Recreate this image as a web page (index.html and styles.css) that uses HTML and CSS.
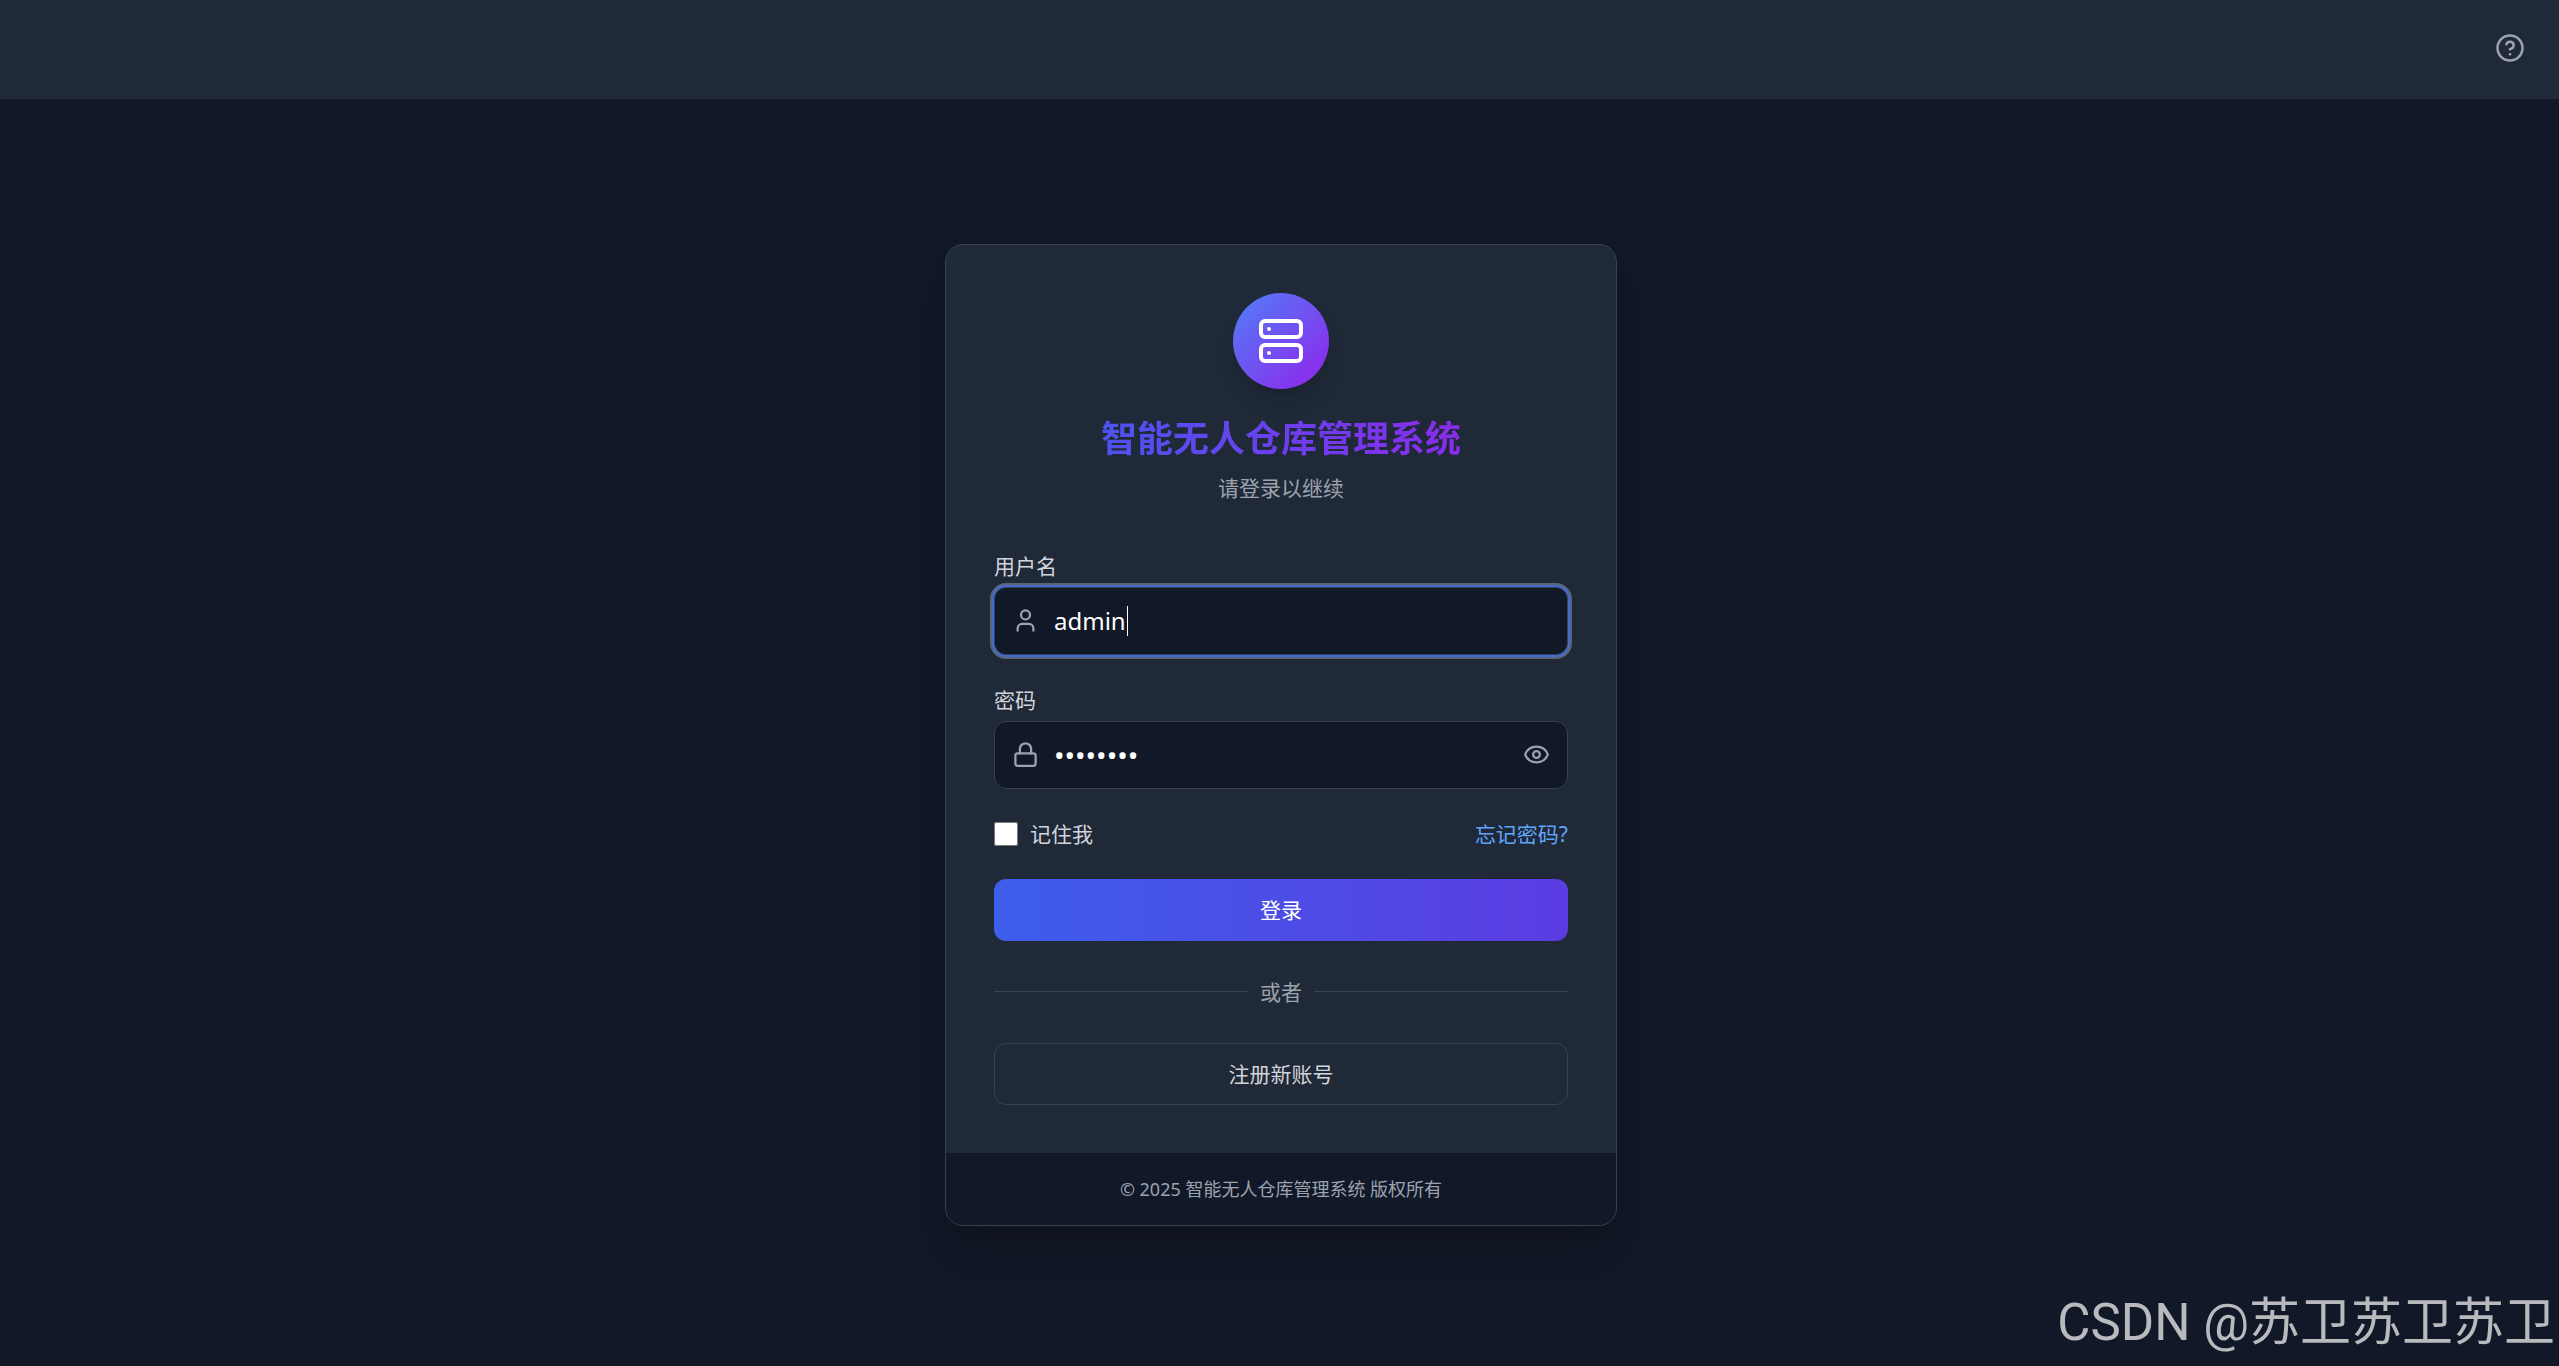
FILE: index.html
```html
<!DOCTYPE html>
<html lang="zh-CN">
<head>
<meta charset="utf-8">
<meta name="viewport" content="width=device-width, initial-scale=1">
<title>智能无人仓库管理系统</title>
<link rel="stylesheet" href="styles.css">
</head>
<body>
<header class="topbar">
  <button class="icon-button" type="button" aria-label="帮助">
    <svg class="icon icon-help" viewBox="0 0 24 24" aria-hidden="true"><circle cx="12" cy="12" r="10"/><path d="M9.09 9a3 3 0 0 1 5.83 1c0 2-3 3-3 3"/><path d="M12 17h.01"/></svg>
  </button>
</header>
<main class="page">
  <section class="card">
    <div class="card-body">
      <div class="brand">
        <div class="logo">
          <svg class="icon icon-server" viewBox="0 0 24 24" aria-hidden="true"><rect x="2" y="2" width="20" height="8" rx="2"/><rect x="2" y="14" width="20" height="8" rx="2"/><path d="M6 6h.01M6 18h.01"/></svg>
        </div>
        <h1 class="title">智能无人仓库管理系统</h1>
        <p class="subtitle">请登录以继续</p>
      </div>
      <form class="form">
        <div class="field">
          <label class="label" for="username">用户名</label>
          <div class="control control-active">
            <svg class="icon" viewBox="0 0 24 24" aria-hidden="true"><path d="M19 21v-2a4 4 0 0 0-4-4H9a4 4 0 0 0-4 4v2"/><circle cx="12" cy="7" r="4"/></svg>
            <div class="typed">
              <input class="input" id="username" type="text" value="admin">
              <span class="caret"></span>
            </div>
          </div>
        </div>
        <div class="field">
          <label class="label" for="password">密码</label>
          <div class="control">
            <svg class="icon" viewBox="0 0 24 24" aria-hidden="true"><rect x="3" y="11" width="18" height="11" rx="2"/><path d="M7 11V7a5 5 0 0 1 10 0v4"/></svg>
            <input class="input input-password" id="password" type="password" value="admin123">
            <button class="icon-button" type="button" aria-label="显示密码">
              <svg class="icon" viewBox="0 0 24 24" aria-hidden="true"><path d="M2.062 12.348a1 1 0 0 1 0-.696 10.75 10.75 0 0 1 19.876 0 1 1 0 0 1 0 .696 10.75 10.75 0 0 1-19.876 0"/><circle cx="12" cy="12" r="3"/></svg>
            </button>
          </div>
        </div>
        <div class="options">
          <label class="remember" for="remember"><input class="checkbox" id="remember" type="checkbox">记住我</label>
          <a class="link" href="#">忘记密码?</a>
        </div>
        <button class="button button-primary" type="submit">登录</button>
      </form>
      <div class="divider">或者</div>
      <button class="button button-outline" type="button">注册新账号</button>
    </div>
    <footer class="card-footer">© 2025 智能无人仓库管理系统 版权所有</footer>
  </section>
</main>
<div class="watermark">CSDN @苏卫苏卫苏卫</div>
</body>
</html>
```
FILE: styles.css
```css
*, *::before, *::after { box-sizing: border-box; }

body {
  margin: 0;
  min-height: 100vh;
  display: flex;
  flex-direction: column;
  background: #111827;
  color: #d1d5db;
  font: 21px/30px "Noto Sans", "Noto Sans CJK SC", sans-serif;
}

h1, p { margin: 0; }
button, input { font: inherit; color: inherit; }

.topbar {
  display: flex;
  align-items: center;
  justify-content: flex-end;
  height: 99px;
  padding: 0 34px 3px;
  background: #1f2937;
}

.icon {
  display: block;
  flex: none;
  width: 27px;
  height: 27px;
  fill: none;
  stroke: #9ca3af;
  stroke-width: 2;
  stroke-linecap: round;
  stroke-linejoin: round;
}

.icon-help { width: 30px; height: 30px; }
.icon-server { width: 48px; height: 48px; stroke: #fff; }

.icon-button {
  display: block;
  padding: 0;
  border: 0;
  background: none;
  cursor: pointer;
}

.page {
  flex: 1;
  display: grid;
  place-items: center;
  padding: 4px 0 0 3px;
}

.card {
  width: 100%;
  max-width: 672px;
  overflow: hidden;
  background: #1f2937;
  border: 1px solid #374151;
  border-radius: 18px;
  box-shadow: 0 30px 38px -8px rgb(16 20 28 / 70%), 0 12px 15px -9px rgb(16 20 28 / 80%);
}

.card-body { padding: 48px; }

.brand {
  display: flex;
  flex-direction: column;
  align-items: center;
  text-align: center;
}

.logo {
  display: grid;
  place-items: center;
  width: 96px;
  height: 96px;
  margin-bottom: 24px;
  border-radius: 50%;
  background: linear-gradient(135deg, #4f7ff8, #9322ea);
  box-shadow: 0 15px 22px -4px rgb(0 0 0 / 12%), 0 6px 9px -6px rgb(0 0 0 / 12%);
}

.title {
  align-self: stretch;
  font-size: 36px;
  line-height: 52px;
  font-weight: 700;
  color: transparent;
  background: linear-gradient(90deg, #3b5ff0, #9b20ea);
  background-clip: text;
  -webkit-background-clip: text;
}

.subtitle {
  margin-top: 8px;
  color: #9ca3af;
}

.form { margin-top: 48px; }
.field { margin-bottom: 30px; }

.label {
  display: block;
  margin-bottom: 6px;
}

.control {
  display: flex;
  align-items: center;
  gap: 15px;
  height: 68px;
  padding: 0 17px;
  background: #111827;
  border: 1px solid #374151;
  border-radius: 12px;
}

.control-active {
  box-shadow: 0 0 0 2px #436bd0, 0 0 0 4px #5a6475;
}

.typed {
  position: relative;
  flex: 1;
  display: flex;
}

.caret {
  position: absolute;
  left: 73px;
  top: 3px;
  width: 1px;
  height: 30px;
  background: #fff;
}

.input {
  flex: 1;
  min-width: 0;
  height: 36px;
  padding: 0;
  border: 0;
  outline: 0;
  background: none;
  color: #fff;
  font-size: 24px;
}

.input-password { font-size: 28px; }

.options {
  display: flex;
  align-items: center;
  justify-content: space-between;
  margin-bottom: 30px;
}

.remember {
  display: flex;
  align-items: center;
  gap: 12px;
}

.checkbox {
  width: 24px;
  height: 24px;
  margin: 0;
}

.link {
  color: #60a5fa;
  text-decoration: none;
}

.button {
  display: block;
  width: 100%;
  height: 62px;
  padding: 0;
  border-radius: 12px;
  cursor: pointer;
}

.button-primary {
  border: 0;
  color: #fff;
  background: linear-gradient(90deg, #3d5eea, #5b3ce2);
}

.button-outline {
  border: 1px solid #374151;
  background: none;
}

.divider {
  display: flex;
  align-items: center;
  gap: 12px;
  margin: 36px 0;
  color: #9ca3af;
}

.divider::before,
.divider::after {
  content: "";
  flex: 1;
  height: 1px;
  background: #374151;
}

.card-footer {
  padding: 24px;
  background: #111827;
  color: #9ca3af;
  font-size: 18px;
  line-height: 24px;
  text-align: center;
}

.watermark {
  position: absolute;
  right: 4px;
  bottom: 7px;
  color: #b8babd;
  font-family: Roboto, "Noto Sans CJK SC", sans-serif;
  font-size: 51px;
  line-height: 72px;
  white-space: nowrap;
}
```
